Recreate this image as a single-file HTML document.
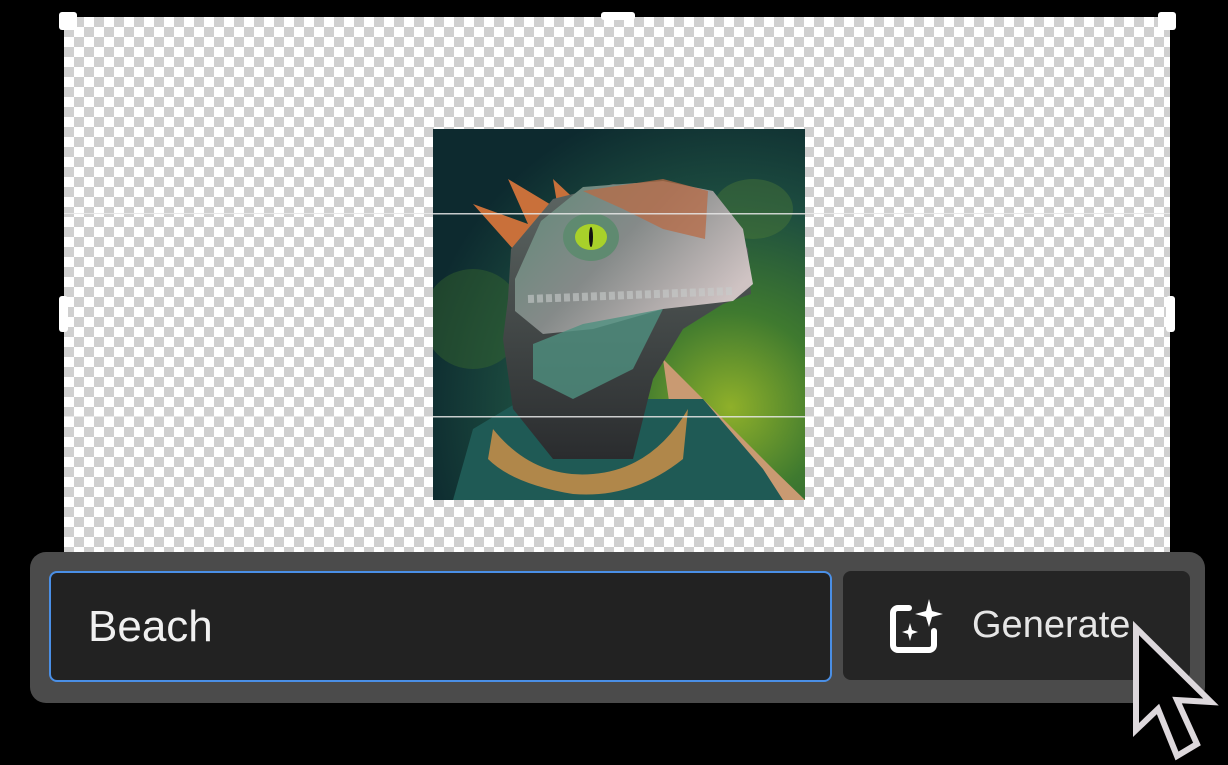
<!DOCTYPE html>
<html><head><meta charset="utf-8"><style>
html,body{margin:0;padding:0;background:#000;width:1228px;height:765px;overflow:hidden;position:relative;font-family:"Liberation Sans",sans-serif}
.canvas{position:absolute;left:64px;top:17px;width:1106px;height:540px;background-color:#fff;
background-image:linear-gradient(45deg,#d0d0d0 25%,transparent 25%,transparent 75%,#d0d0d0 75%),linear-gradient(45deg,#d0d0d0 25%,transparent 25%,transparent 75%,#d0d0d0 75%);
background-size:20px 20px;background-position:0 0,10px 10px}
.gl{position:absolute;left:64px;width:1106px;height:1px;background:#e8e8e8}
.h{position:absolute;background:#fff;border-radius:3px}
.panel{position:absolute;left:30px;top:552px;width:1175px;height:151px;background:#4b4b4b;border-radius:16px}
.input{position:absolute;left:49px;top:571px;width:779px;height:107px;background:#222;border:2px solid #4a8fe6;border-radius:8px;color:#f0f0f0;font-size:44px;line-height:107px;box-sizing:content-box}
.input span{margin-left:37px}
.btn{position:absolute;left:843px;top:571px;width:347px;height:109px;background:#252525;border-radius:8px;color:#e6e6e6;font-size:38px}
</style></head><body>
<div class="canvas"></div>
<div class="gl" style="top:213px"></div>
<div class="gl" style="top:416px"></div>
<div class="h" style="left:59px;top:12px;width:18px;height:18px"></div>
<div class="h" style="left:1158px;top:12px;width:18px;height:18px"></div>
<div class="h" style="left:601px;top:12px;width:34px;height:8px"></div>
<div class="h" style="left:59px;top:296px;width:9px;height:36px"></div>
<div class="h" style="left:1166px;top:296px;width:9px;height:36px"></div>

<svg style="position:absolute;left:433px;top:129px" width="372" height="371" viewBox="0 0 372 371">
<defs>
<radialGradient id="bg" cx="0.8" cy="0.75" r="0.85"><stop offset="0" stop-color="#8fb02a"/><stop offset="0.3" stop-color="#3f7a2f"/><stop offset="0.65" stop-color="#1d4d40"/><stop offset="1" stop-color="#0d2a2f"/></radialGradient>
<linearGradient id="head" x1="0" y1="0" x2="1" y2="0.6"><stop offset="0" stop-color="#5f8a78"/><stop offset="0.5" stop-color="#858a89"/><stop offset="1" stop-color="#cfc3c3"/></linearGradient>
<linearGradient id="neck" x1="0" y1="0" x2="0" y2="1"><stop offset="0" stop-color="#5d6663"/><stop offset="1" stop-color="#2a2c2e"/></linearGradient>
</defs>
<rect width="372" height="371" fill="url(#bg)"/>
<ellipse cx="320" cy="80" rx="40" ry="30" fill="#4f7d38" opacity="0.4"/>
<ellipse cx="40" cy="190" rx="50" ry="50" fill="#3c6e2c" opacity="0.4"/>
<path d="M230 230 L260 260 L300 300 L340 340 L372 371 L250 371 Z" fill="#c99a72"/>
<path d="M20 371 L40 300 L90 270 L270 270 L330 340 L350 371 Z" fill="#1f5a55"/>
<path d="M80 120 L40 75 L95 95 L75 50 L125 80 L120 50 L150 78 L140 140 Z" fill="#c9703a"/>
<path d="M75 170 L78 120 L120 70 L180 55 L260 60 L290 90 L315 120 L318 165 L290 175 L250 200 L220 250 L200 330 L120 330 L80 280 L70 210 Z" fill="url(#neck)"/>
<path d="M82 150 L108 92 L150 58 L230 52 L280 62 L310 100 L320 155 L300 172 L230 180 L160 200 L110 205 L82 182 Z" fill="url(#head)"/>
<path d="M150 62 L230 50 L275 62 L272 110 L230 100 L190 80 Z" fill="#b86b45" opacity="0.75"/>
<path d="M95 170 L300 162" stroke="#c8cccb" stroke-width="8" stroke-dasharray="6 3" opacity="0.6"/>
<path d="M100 215 L150 195 L230 180 L200 240 L140 270 L100 250 Z" fill="#4f9080" opacity="0.8"/>
<ellipse cx="158" cy="108" rx="28" ry="24" fill="#5f8a70"/>
<ellipse cx="158" cy="108" rx="16" ry="13" fill="#a8d12a"/>
<ellipse cx="158" cy="108" rx="2" ry="10" fill="#111"/>
<path d="M60 300 Q100 350 160 345 Q220 340 255 280 L250 330 Q200 370 140 365 Q80 355 55 330 Z" fill="#b0874a"/>
<rect x="0" y="84" width="372" height="1.5" fill="#e8e8e8" opacity="0.85"/>
<rect x="0" y="287" width="372" height="1.5" fill="#e8e8e8" opacity="0.85"/>
</svg>

<div class="panel"></div>
<div class="input"><span>Beach</span></div>
<div class="btn">
<svg style="position:absolute;left:46px;top:26px" width="58" height="58" viewBox="0 0 58 58">
<path d="M20 11 H9 a5 5 0 0 0 -5 5 V48 a5 5 0 0 0 5 5 H40 a5 5 0 0 0 5 -5 V34" fill="none" stroke="#fff" stroke-width="6" stroke-linecap="round"/>
<path d="M40 2 L43 14 L54 17 L43 20 L40 30 L37 20 L26 17 L37 14 Z" fill="#fff"/>
<path d="M21 26 L23 33 L29 35 L23 37 L21 44 L19 37 L13 35 L19 33 Z" fill="#fff"/>
</svg>
<span style="position:absolute;left:129px;top:33px">Generate</span>
</div>
<svg style="position:absolute;left:0;top:0" width="1228" height="765">
<path d="M1136 628 L1136 730 L1158 709 L1177 756 L1197 744 L1177 700 L1211 702 Z" fill="#000" stroke="#ddd8dc" stroke-width="6" stroke-linejoin="miter"/>
</svg>
</body></html>
